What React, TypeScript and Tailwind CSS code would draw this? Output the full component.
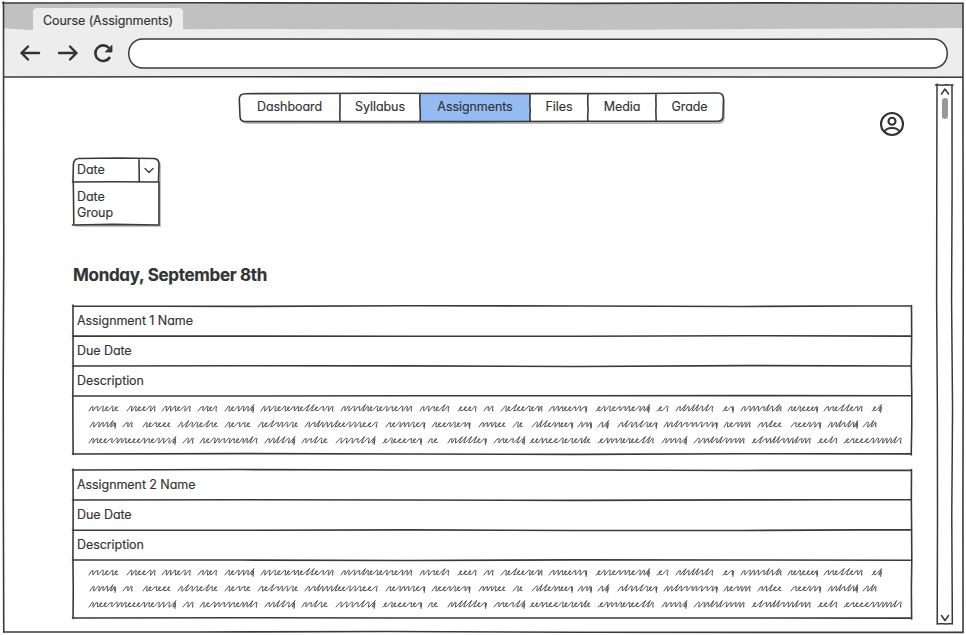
import React from "react";

const INK = "#3a3a3a";

function noise(seed: number) {
  const v = Math.sin(seed * 127.1 + 11.7) * 43758.5453;
  return v - Math.floor(v);
}

// A hand-drawn straight line that drifts slightly along its length.
function rough(x1: number, y1: number, x2: number, y2: number, seed: number, amp = 0.4) {
  const n = 5;
  const vertical = x1 === x2;
  let d = `M${x1} ${y1}`;
  for (let i = 1; i <= n; i++) {
    const t = i / n;
    const o = (noise(seed * 9 + i) - 0.5) * 2 * amp;
    const x = x1 + (x2 - x1) * t + (vertical ? o : 0);
    const y = y1 + (y2 - y1) * t + (vertical ? 0 : o);
    d += `L${x.toFixed(2)} ${y.toFixed(2)}`;
  }
  return d;
}

function Ink({ d, fill = "none", w = 1.6 }: { d: string; fill?: string; w?: number }) {
  return (
    <svg className="pointer-events-none absolute left-0 top-0 h-full w-full overflow-visible" fill={fill} stroke={INK} strokeWidth={w} strokeLinecap="round" strokeLinejoin="round">
      <path d={d} />
    </svg>
  );
}

const LINES: number[][][] = [
  [[88,118],[126,155],[161,191],[197,218],[224,253],[260,333],[340,414],[419,451],[457,476],[483,494],[500,542],[548,588],[595,650],[656,668],[675,715],[722,733],[740,781],[787,817],[823,863],[871,882]],
  [[89,115],[122,134],[142,170],[177,218],[224,251],[257,298],[304,379],[385,425],[431,471],[478,505],[512,524],[531,572],[577,591],[597,609],[617,657],[663,718],[723,750],[757,783],[790,821],[827,857],[862,876]],
  [[88,176],[182,193],[199,258],[264,294],[301,328],[335,375],[382,421],[427,440],[447,487],[493,524],[529,590],[597,654],[661,687],[693,744],[751,811],[817,838],[843,902]],
];

// Cursive-looking strokes: slanted arches, small loops and occasional ascenders.
function scribble(x1: number, x2: number, base: number, seed: number) {
  const p = (n: number) => n.toFixed(2);
  let x = x1;
  let i = 0;
  let d = `M${p(x)} ${p(base)}`;
  while (x < x2 - 2.6) {
    const r = noise(seed + i * 3.7);
    const k = noise(seed * 2 + i * 5.1 + 3);
    const s = Math.min(3.9 + k * 1.7, x2 - x);
    const last = x + s >= x2 - 2.6;
    if (r < 0.24) {
      // small loop
      d += `Q${p(x + s * 0.6)} ${p(base - 1.6)} ${p(x + s * 0.9)} ${p(base - 4)}`;
      d += `Q${p(x + s * 0.5)} ${p(base - 5.2)} ${p(x + s * 0.4)} ${p(base - 2)}`;
      d += `Q${p(x + s * 0.4)} ${p(base + 0.6)} ${p(x + s)} ${p(base - 0.6)}`;
    } else if (r < 0.62) {
      // arch
      d += `L${p(x + s * 0.8)} ${p(base - 4.9)}`;
      d += `Q${p(x + s * 1.25)} ${p(base - 5.1)} ${p(x + s * 0.9)} ${p(base - 2)}`;
      d += `L${p(x + s * 0.9)} ${p(base + 0.2)}L${p(x + s)} ${p(base)}`;
    } else if (r < 0.8 && i > 0) {
      // ascender
      d += `L${p(x + s * 1.2)} ${p(base - 6.4)}`;
      d += `L${p(x + s * 0.6)} ${p(base - 0.2)}L${p(x + s)} ${p(base - 0.5)}`;
    } else {
      d += `L${p(x + s * 0.6)} ${p(base - 4)}L${p(x + s * 1.05)} ${p(base - 4.3)}`;
      d += `Q${p(x + s * 0.75)} ${p(base - 0.4)} ${p(x + s)} ${p(base)}`;
    }
    x += s;
    i++;
    if (last && r > 0.6) d += `L${p(x + 0.6)} ${p(base - 4)}L${p(x)} ${p(base + 1.5)}`;
  }
  return d;
}

function Scribbles() {
  return (
    <svg className="block h-[58px] w-full" fill="none" stroke="#555" strokeWidth="1" strokeLinejoin="round" strokeLinecap="round">
      {LINES.map((line, row) =>
        line.map(([a, b], i) => (
          <path key={`${row}-${i}`} d={scribble(a - 72, b - 73, 15 + row * 16, row * 31 + i * 5.3)} />
        ))
      )}
    </svg>
  );
}

function Assignment({ name, seed }: { name: string; seed: number }) {
  const d = [0, 30, 60, 90, 148].map((y, i) => rough(-0.5, y, 838.5, y, seed + i, 0.5)).join("") +
    rough(0, -1, 0, 148.5, seed + 8, 0.3) + rough(838.5, -0.5, 838.5, 149, seed + 9, 0.3);
  return (
    <section className="relative h-[148px] w-[838px]">
      <Ink d={d} />
      {[name, "Due Date", "Description"].map((t) => (
        <div key={t} className="flex h-[30px] items-center pl-[4px] pt-[1px]">{t}</div>
      ))}
      <Scribbles />
    </section>
  );
}

const TABS = [
  { label: "Dashboard", cls: "w-[101px]" },
  { label: "Syllabus", cls: "w-[80px]" },
  { label: "Assignments", cls: "w-[110px] bg-[#94bbf2]" },
  { label: "Files", cls: "w-[58px]" },
  { label: "Media", cls: "w-[68px]" },
  { label: "Grade", cls: "w-[67px]" },
];

function BrowserBar() {
  return (
    <header className="relative h-[74px] bg-[#ededed]">
      <div className="h-[26px] pl-[33px] pt-[5px]">
        <div className="absolute left-0 top-0 h-[27px] w-full bg-[#c1c1c1] [clip-path:polygon(0_0,100%_0,100%_25px,60%_27px,25%_26px,3%_27px,0_25px)]" />
        <div className="relative h-[22px] w-[150px] rounded-t-[4px] bg-[#ededed] pl-[10px] pt-[2px] leading-[22px]">Course (Assignments)</div>
      </div>
      <div className="flex h-[48px] items-center pl-[20px]">
        <svg className="h-[24px] w-[108px] shrink-0" fill="none" stroke="#333" strokeWidth="2.4" strokeLinecap="round" strokeLinejoin="round">
          <path d="M19 12H1.5M8 5.5L1.5 12L8 18.5" />
          <path d="M39 12H56.5M50 5.5L56.5 12L50 18.5" />
          <path d="M89 7A7.8 7.8 0 1 0 90 16" strokeWidth="2.6" strokeLinecap="butt" />
          <path d="M92 4.5V11H85.5Z" fill="#333" strokeWidth="0.8" />
        </svg>
        <div className="relative h-[29px] w-[819px] rounded-full bg-white">
          <Ink w={1.5} d="M15 0Q250 1 400 .3T805 0C824 0 824 29 805 29Q560 28.5 400 29T15 29C-4 29-4 0 15 0Z" />
        </div>
      </div>
    </header>
  );
}

function Navigation() {
  return (
    <nav className="relative ml-[239px] flex h-[29px] w-[484px] rounded-[6px] bg-white shadow-[2px_2px_0_#bdbdbd]">
      {TABS.map((t) => (
        <div key={t.label} className={`flex items-center justify-center pb-[1px] ${t.cls}`}>{t.label}</div>
      ))}
      <Ink d={"M6 .7Q120 0 240 .5T479 0Q484.5 0 484.5 6L484 23Q484 28 479 28.3L350 28.2L240 28.6L6 28.5Q1 28.5 1 23L.3 6Q.3.7 6 .7" + [101, 181, 291, 349, 417].map((x, i) => rough(x, 0.5, x, 28.5, i + 4, 0.3)).join("")} />
    </nav>
  );
}

function DateSelect() {
  return (
    <div className="relative h-[67px] w-[86px] rounded-t-[5px] bg-white shadow-[2px_2px_0_#c4c4c4]">
      <div className="flex h-[24px] items-center pl-[4px] pt-[1px]">Date</div>
      <div className="pl-[4px] pt-[7px] leading-[16px]">
        <div>Date</div>
        <div>Group</div>
      </div>
      <Ink d="M0 23.5L.4 6Q1 .5 6 .5L45 0L81 .5Q86 1 86 6L85.5 24M-.5 24L40 23.7L86 24M66 .5L66.3 24M.3 24L.8 67M86 24L86 67M-.5 67L40 66.4L86 67" />
      <Ink w={1.3} d="M72 10.5L76 14.5L80 10.5" />
    </div>
  );
}

function Account() {
  return (
    <svg className="h-[26px] w-[26px]" viewBox="0 0 26 26" fill="none" stroke="#333" strokeWidth="2.1">
      <circle cx="13" cy="13" r="11" />
      <circle cx="13" cy="10.3" r="3.5" />
      <path d="M5.5 21Q6.8 17 13 17T20.5 21" />
    </svg>
  );
}

function Scrollbar() {
  return (
    <aside className="relative flex h-[539px] w-[15px] flex-col items-center pt-[13px]">
      <div className="ml-px h-[21px] w-[6px] rounded-full bg-[#999]" />
      <Ink w={1.5} d={rough(-1.5, 0, 16, 0, 3, 0.2) + rough(0, -1, 0, 538, 5, 0.5) + rough(15, 0, 15, 539, 6, 0.6) + rough(0, 539, 15, 539, 7, 0.2)} />
      <Ink w={1.5} d="M4.5 9L8 4L11.5 9M4.5 530.5L8 535.5L11.5 530.5" />
    </aside>
  );
}

export default function App() {
  return (
    <div className="h-[635px] w-[966px] overflow-hidden bg-white pt-[3px] text-[12.5px] tracking-[-0.07px] text-[#333] [-webkit-text-stroke:0.15px_#333]" style={{ fontFamily: 'Inter, "Liberation Sans", sans-serif', fontFeatureSettings: '"cv11"' }}>
      <main className="relative h-[629px] w-[966px]">
        <div className="w-[963px]"><BrowserBar /></div>
        <div className="flex h-[555px] justify-between">
          <div className="w-[912px] pt-[16px]">
            <Navigation />
            <div className="flex h-[104px] items-start justify-between pl-[73px] pr-[7px]">
              <div className="pt-[36px]"><DateSelect /></div>
              <div className="-mt-[11px]"><Account /></div>
            </div>
            <h1 className="mt-[37px] h-[43px] pl-[73px] text-[17px] font-bold leading-[24px] tracking-[-0.3px]">Monday, September 8th</h1>
            <div className="flex flex-col gap-[16px] pl-[73px]">
              <Assignment name="Assignment 1 Name" seed={12} />
              <Assignment name="Assignment 2 Name" seed={32} />
            </div>
          </div>
          <div className="pr-[14px] pt-[8px]"><Scrollbar /></div>
        </div>
        <div className="absolute left-0 top-0 h-[629px] w-[3px] bg-white" />
        <Ink d={rough(2.5, 0, 963, 0, 41, 0.4) + rough(3.5, -1, 3.5, 629, 42, 0.3) + rough(963, 0, 963, 629.5, 43, 0.3) + rough(3.5, 629, 963, 629, 44, 0.5) + rough(3.5, 74, 963, 74, 45, 0.4)} />
      </main>
    </div>
  );
}
